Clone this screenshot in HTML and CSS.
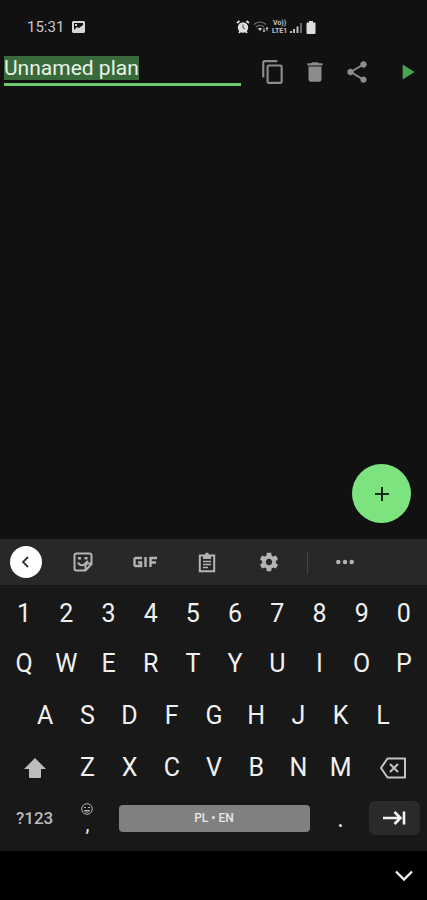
FILE: index.html
```html
<!DOCTYPE html>
<html lang="en">
<head>
<meta charset="utf-8">
<meta name="viewport" content="width=device-width, initial-scale=1">
<title>Unnamed plan</title>
<link rel="stylesheet" href="styles.css">
</head>
<body>
<div class="screen">
  <div class="status">
    <div class="status-left">
      <time>15:31</time>
      <svg width="13" height="12" viewBox="0 0 13 12"><path fill="#d6d6d6" fill-rule="evenodd" d="M1 0h11l1 1v10l-1 1H1l-1-1V1zM2 2v7l3-3 2 1 4-3V2zM3 3h2v2H3z"/></svg>
    </div>
    <div class="status-right">
      <svg width="14" height="14" viewBox="0 0 14 14"><circle cx="7" cy="7.500" r="5.200" fill="#dedede"/><path d="M1 3l2.500-2M13 3l-2.500-2M3 13l1.500-2M11 13l-1.500-2" stroke="#dedede" stroke-width="1.800"/><path d="M7 4.500v3.300l2 1" fill="none" stroke="#444" stroke-width="1"/></svg>
      <svg width="16" height="14" viewBox="0 0 16 14"><g fill="none" stroke="#777" stroke-width="1.200"><path d="M1 4.500q6-5 12 0M3 7q4-3.500 8 0"/></g><path d="M5 8.500q2-1.500 4 0l-2 2.500z" fill="#ccc"/><path d="M11 8v4M14 7v4" stroke="#bbb"/><path d="M9.500 10.500l1.500 2 1.500-2zM12.500 9l1.500-2 1.500 2z" fill="#bbb"/></svg>
      <span class="volte"><span>Vo))</span><span>LTE1</span></span>
      <svg width="13" height="13" viewBox="0 0 13 13"><path fill="#bdbdbd" d="M0 10h2v2H0zM3 8h2v4H3zM6.500 5.500h2V12h-2z"/><path fill="#666" d="M10 2h2v10h-2z"/></svg>
      <svg class="battery" width="10" height="13" viewBox="0 0 10 13"><path fill="#ddd" d="M3 0h4v1.500h1.500q1 0 1 1V12q0 1-1 1h-7q-1 0-1-1V2.500q0-1 1-1H3z"/></svg>
    </div>
  </div>

  <header class="bar">
    <input class="plan-name" id="plan-name" type="text" value="Unnamed plan" aria-label="Plan name" spellcheck="false" autocomplete="off">
    <div class="actions">
      <button class="action" aria-label="Copy"><svg class="icon" viewBox="0 0 24 24"><path d="M16 1H4c-1.100 0-2 .9-2 2v14h2V3h12V1zm3 4H8c-1.100 0-2 .9-2 2v14c0 1.100.9 2 2 2h11c1.100 0 2-.9 2-2V7c0-1.100-.9-2-2-2zm0 16H8V7h11v14z"/></svg></button>
      <button class="action" aria-label="Delete"><svg class="icon" viewBox="0 0 24 24"><path d="M6 19c0 1.100.9 2 2 2h8c1.100 0 2-.9 2-2V7H6v12zM19 4h-3.500l-1-1h-5l-1 1H5v2h14V4z"/></svg></button>
      <button class="action" aria-label="Share"><svg class="icon" viewBox="0 0 24 24"><path d="M18 16.080c-.76 0-1.440.3-1.960.77L8.910 12.700c.05-.23.09-.46.09-.7s-.04-.47-.09-.7l7.050-4.110c.54.5 1.250.81 2.040.81 1.660 0 3-1.340 3-3s-1.340-3-3-3-3 1.340-3 3c0 .24.040.47.09.7L8.040 9.810C7.500 9.310 6.790 9 6 9c-1.660 0-3 1.340-3 3s1.340 3 3 3c.79 0 1.500-.31 2.040-.81l7.120 4.160c-.05.21-.08.43-.08.65 0 1.610 1.310 2.920 2.920 2.920s2.920-1.310 2.920-2.920-1.310-2.920-2.920-2.920z"/></svg></button>
      <button class="action play" aria-label="Start"><svg class="icon" viewBox="0 0 24 24"><path d="M8 5v14l11-7z"/></svg></button>
    </div>
  </header>

  <main class="content">
    <button class="fab" aria-label="Add"><svg width="16" height="16" viewBox="0 0 16 16"><path d="M8 1v14M1 8h14" stroke="#142a15" stroke-width="2"/></svg></button>
  </main>

  <section class="keyboard" aria-label="Keyboard">
    <div class="tools">
      <button aria-label="Back"><span class="disc"><svg width="12" height="14" viewBox="0 0 12 14"><path d="M8 2L3 7l5 5" fill="none" stroke="#333" stroke-width="1.800"/></svg></span></button>
      <button aria-label="Stickers"><svg width="20" height="20" viewBox="0 0 20 20"><g fill="none" stroke="#b4b4b4" stroke-width="2"><path d="M3.500 1.500h13q2 0 2 2V12l-6 6.500h-9q-2 0-2-2v-13q0-2 2-2z"/><path d="M18 11.500h-3.500q-2 0-2 2V18"/><path d="M5 10.500q2 3.500 5.500 2.500l4.500-4"/></g><path d="M5 5h3v2.500H5zM11.500 5h3v2.500h-3z" fill="#b4b4b4"/></svg></button>
      <button aria-label="GIF"><svg width="25" height="12" viewBox="0 0 25 12"><path d="M9 2H2.500L1.500 3v6l1 1H8V6.500H5M12.500 1v10M17.500 11V2H24M17.500 6.500H23" fill="none" stroke="#b4b4b4" stroke-width="2.400"/></svg></button>
      <button aria-label="Clipboard"><svg width="18" height="21" viewBox="0 0 18 21"><path d="M1.800 3.500h14.400v15.700H1.800z" fill="none" stroke="#b4b4b4" stroke-width="2"/><path d="M5 3h2q0-2.500 2-2.500T11 3h2v4H5z" fill="#b4b4b4"/><path d="M5 9.500h8M5 12.500h8M5 15.500h5" stroke="#b4b4b4" stroke-width="1.600"/></svg></button>
      <button aria-label="Settings"><svg width="22" height="22" viewBox="0 0 24 24"><path fill="#b4b4b4" d="M19.430 12.980c.04-.32.07-.64.07-.98s-.03-.66-.07-.98l2.110-1.650c.19-.15.24-.42.12-.64l-2-3.460c-.12-.22-.39-.3-.61-.22l-2.490 1c-.52-.4-1.080-.73-1.690-.98l-.38-2.650C14.460 2.180 14.250 2 14 2h-4c-.25 0-.46.18-.49.42l-.38 2.650c-.61.25-1.170.59-1.690.98l-2.490-1c-.23-.09-.49 0-.61.22l-2 3.460c-.13.22-.07.49.12.64l2.110 1.650c-.04.32-.07.65-.07.98s.03.66.07.98l-2.110 1.650c-.19.15-.24.42-.12.64l2 3.460c.12.22.39.3.61.22l2.490-1c.52.4 1.080.73 1.690.98l.38 2.650c.03.24.24.42.49.42h4c.25 0 .46-.18.49-.42l.38-2.650c.61-.25 1.170-.59 1.690-.98l2.490 1c.23.09.49 0 .61-.22l2-3.460c.12-.22.07-.49-.12-.64l-2.110-1.650zM12 15.500c-1.930 0-3.500-1.570-3.500-3.500s1.570-3.500 3.500-3.500 3.500 1.570 3.500 3.500-1.570 3.500-3.500 3.500z"/></svg></button>
      <span class="divider"></span>
      <button aria-label="More"><svg width="18" height="6" viewBox="0 0 18 6"><g fill="#b4b4b4"><circle cx="2.300" cy="3" r="2.200"/><circle cx="9" cy="3" r="2.200"/><circle cx="15.700" cy="3" r="2.200"/></g></svg></button>
    </div>
    <div class="keys">
      <div class="row"><button>1</button><button>2</button><button>3</button><button>4</button><button>5</button><button>6</button><button>7</button><button>8</button><button>9</button><button>0</button></div>
      <div class="row"><button>Q</button><button>W</button><button>E</button><button>R</button><button>T</button><button>Y</button><button>U</button><button>I</button><button>O</button><button>P</button></div>
      <div class="row home"><button>A</button><button>S</button><button>D</button><button>F</button><button>G</button><button>H</button><button>J</button><button>K</button><button>L</button></div>
      <div class="row">
        <button class="wide" aria-label="Shift"><svg width="24" height="22" viewBox="0 0 24 22"><path d="M12 1l11 11h-5v8q0 1-1 1H7q-1 0-1-1v-8H1z" fill="#bdbdbd"/></svg></button>
        <button>Z</button><button>X</button><button>C</button><button>V</button><button>B</button><button>N</button><button>M</button>
        <button class="wide" aria-label="Backspace"><svg width="28" height="22" viewBox="0 0 28 22"><path d="M8.500 1.500H26v19H8.500L2 11z" fill="none" stroke="#c4c4c4" stroke-width="2" stroke-linejoin="round"/><path d="M11 7l8 8M19 7l-8 8" stroke="#c4c4c4" stroke-width="2"/></svg></button>
      </div>
      <div class="row">
        <button class="wide symbols">?123</button>
        <button class="comma"><svg width="12" height="12" viewBox="0 0 12 12"><g fill="none" stroke="#b4b4b4"><circle cx="6" cy="6" r="5.300"/><path d="M3 7.500h6q-3 3.500-6 0M3 4.500h2M7 4.500h2"/></g></svg><span>,</span></button>
        <button class="space"><span>PL • EN</span></button>
        <button class="period">.</button>
        <button class="wide next" aria-label="Next"><span><svg width="24" height="16" viewBox="0 0 24 16"><path d="M1 8h17M12.500 2l6 6-6 6M22 1.500v13" fill="none" stroke="#f2f2f2" stroke-width="2.600"/></svg></span></button>
      </div>
    </div>
  </section>

  <nav class="nav">
    <button aria-label="Hide keyboard"><svg width="20" height="14" viewBox="0 0 20 14"><path d="M2 2.500l8 8 8-8" fill="none" stroke="#eee" stroke-width="2.400"/></svg></button>
  </nav>
</div>
<script src="script.js"></script>
</body>
</html>
```
FILE: styles.css
```css
* {
  box-sizing: border-box;
}

body {
  margin: 0;
  background: #111;
  color: #f0f0f0;
  font-family: Roboto, "Liberation Sans", sans-serif;
}

button {
  display: flex;
  align-items: center;
  justify-content: center;
  min-width: 0;
  margin: 0;
  padding: 0;
  border: 0;
  background: none;
  color: inherit;
  font: inherit;
}

svg {
  display: block;
  flex: none;
}

.screen {
  display: flex;
  flex-direction: column;
  min-height: 100vh;
}

.status {
  display: grid;
  grid-template-columns: 236fr 191fr;
  align-items: center;
  height: 54px;
}

.status-left,
.status-right {
  display: flex;
  align-items: center;
}

.status-left {
  gap: 8px;
  padding-left: 27px;
  color: #c8c8c8;
  font-size: 15px;
}

.status-right {
  gap: 3px;
}

.volte {
  display: flex;
  flex-direction: column;
  align-items: center;
  color: #c4c4c4;
  font-size: 7px;
  font-weight: 700;
  line-height: 8px;
}

.bar {
  display: flex;
  gap: 11px;
  padding: 0 1px 0 4px;
}

.plan-name {
  flex: 1;
  min-width: 0;
  height: 32px;
  padding: 0 0 2px;
  border: 0;
  border-bottom: 3px solid #6fc974;
  border-radius: 0;
  outline: 0;
  background: none;
  color: #e8f3e8;
  caret-color: transparent;
  font: 21px/27px Roboto, "Liberation Sans", sans-serif;
}

.plan-name::selection {
  background: #386a3b;
  color: #e8f3e8;
}

.actions {
  display: flex;
}

.action {
  width: 42px;
  height: 36px;
}

.play {
  width: 38px;
  margin-left: 10px;
}

.icon {
  width: 26px;
  height: 26px;
  fill: #8c8c8c;
}

.play .icon {
  fill: #4aa553;
}

.content {
  position: relative;
  flex: 1;
}

.fab {
  position: absolute;
  right: 16px;
  bottom: 16px;
  width: 59px;
  height: 59px;
  border-radius: 50%;
  background: #7de37f;
}

.keyboard {
  background: #181818;
}

.tools {
  display: grid;
  grid-template-columns: 52fr 62fr 62fr 62fr 62fr 14fr 62fr 51fr;
  height: 46px;
  background: #282828;
}

.disc {
  display: flex;
  align-items: center;
  justify-content: center;
  width: 32px;
  height: 32px;
  border-radius: 50%;
  background: #fff;
}

.divider {
  place-self: center;
  width: 1px;
  height: 23px;
  background: #454545;
}

.keys {
  display: grid;
  grid-template-rows: 50px 50px 54px 51px 50px;
  padding: 3px 2px 8px 3px;
  font-size: 25px;
}

.row {
  display: grid;
  grid-template-columns: repeat(20, 1fr);
}

.row button {
  grid-column: span 2;
}

.home {
  grid-template-columns: repeat(18, 1fr);
  padding: 0 21px;
}

.row .wide {
  grid-column: span 3;
}

.symbols {
  color: #bdbdbd;
  font-size: 17px;
  font-weight: 500;
}

.comma {
  flex-direction: column;
  font-size: 20px;
  line-height: 18px;
}

.row .space {
  grid-column: span 10;
  padding: 0 10px;
  color: #e6e6e6;
  font-size: 12px;
  font-weight: 500;
}

.space span {
  flex: 1;
  border-radius: 4px;
  background: #808080;
  line-height: 27px;
}

.next {
  padding: 0 5px 0 7px;
}

.next span {
  display: flex;
  flex: 1;
  align-items: center;
  justify-content: center;
  height: 34px;
  border-radius: 6px;
  background: #2a2a2a;
}

.nav {
  display: flex;
  justify-content: flex-end;
  height: 49px;
  background: #000;
}

.nav button {
  width: 46px;
}
```
FILE: script.js
```js
const planName = document.getElementById("plan-name");
planName.focus();
planName.select();
```
